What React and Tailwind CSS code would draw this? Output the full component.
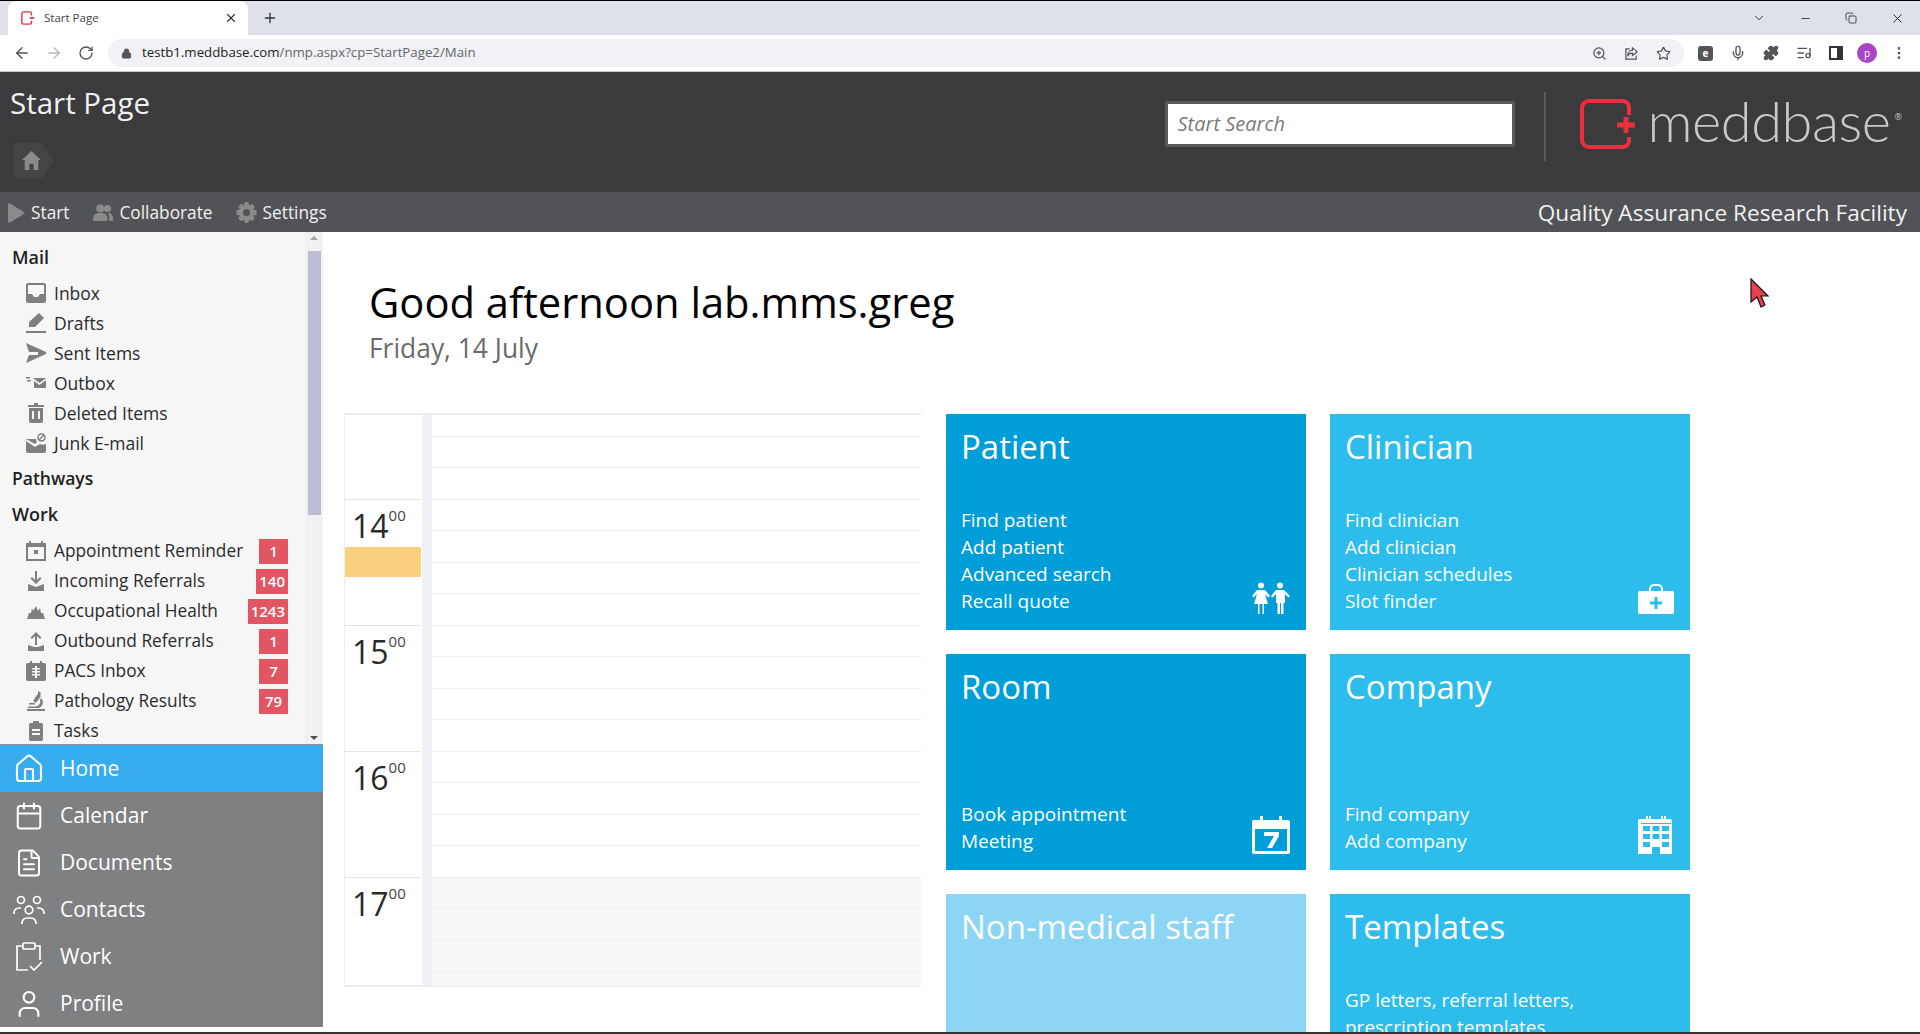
import {
  ArrowLeft, ArrowRight, RotateCw, Lock, ZoomIn, Star, Mic, Puzzle, ListMusic,
  MoreVertical, ChevronDown, Minus, Copy, X, Plus, Home, Calendar, FileText, User,
} from "lucide-react";

const mail = [
  ["Inbox", InboxIcon],
  ["Drafts", DraftIcon],
  ["Sent Items", SentIcon],
  ["Outbox", OutboxIcon],
  ["Deleted Items", TrashIcon],
  ["Junk E-mail", JunkIcon],
];

const work = [
  ["Appointment Reminder", ApptIcon, "1"],
  ["Incoming Referrals", DownIcon, "140"],
  ["Occupational Health", OccIcon, "1243"],
  ["Outbound Referrals", UpIcon, "1"],
  ["PACS Inbox", PacsIcon, "7"],
  ["Pathology Results", MicroIcon, "79"],
  ["Tasks", TaskIcon],
];

function InboxIcon() {
  return (
    <svg viewBox="0 0 20 20" className="w-5 h-5" fill="#7f7f7f">
      <path fillRule="evenodd" d="M2 0h16a2 2 0 0 1 2 2v16a2 2 0 0 1-2 2H2a2 2 0 0 1-2-2V2a2 2 0 0 1 2-2zm0 2v9h4l2 3h4l2-3h4V2z" />
    </svg>
  );
}
function DraftIcon() {
  return (
    <svg viewBox="0 0 20 20" className="w-5 h-5" fill="#7f7f7f">
      <path d="M13 0l5 5-9 9H3v-5z" />
      <rect x="0" y="18" width="20" height="2" />
    </svg>
  );
}
function SentIcon() {
  return (
    <svg viewBox="0 0 20 20" className="w-5 h-5" fill="#7f7f7f">
      <path d="M0 0l20 9v2L0 20l3-8h9V9H3z" />
    </svg>
  );
}
function OutboxIcon() {
  return (
    <svg viewBox="0 0 20 20" className="w-5 h-5" fill="#7f7f7f">
      <path d="M7 5h13l-6.500 5zM8 8l5.500 4L20 7v7a1 1 0 0 1-1 1H9a1 1 0 0 1-1-1zM0 4h4v1.500H0zM1 7h4v1.500H1z" />
    </svg>
  );
}
function TrashIcon() {
  return (
    <svg viewBox="0 0 20 20" className="w-5 h-5" fill="#7f7f7f">
      <path fillRule="evenodd" d="M8 0h4v2h6v2H2V2h6zM3 5h14v13a2 2 0 0 1-2 2H5a2 2 0 0 1-2-2zm3 3v8h2V8zm6 0v8h2V8z" />
    </svg>
  );
}
function JunkIcon() {
  return (
    <svg viewBox="0 0 20 20" className="w-5 h-5" fill="#7f7f7f">
      <path d="M0 6h10a6 6 0 0 0 1 3L9 11zM0 8l9 6 5-3a7 7 0 0 0 6 0v7a2 2 0 0 1-2 2H2a2 2 0 0 1-2-2z" />
      <circle cx="15.500" cy="4.500" r="3.500" fill="none" stroke="#7f7f7f" strokeWidth="1.500" />
      <path d="M13 7l5-5" stroke="#7f7f7f" strokeWidth="1.500" />
    </svg>
  );
}
function ApptIcon() {
  return (
    <svg viewBox="0 0 20 20" className="w-5 h-5" fill="#7f7f7f">
      <path fillRule="evenodd" d="M3 0h2v2h10V0h2v2h3v18H0V2h3zM2 6v12h16V6zm6 3h4v4H8z" />
    </svg>
  );
}
function DownIcon() {
  return (
    <svg viewBox="0 0 20 20" className="w-5 h-5" fill="#7f7f7f">
      <path d="M9 0h2v9l3-3 1.500 1.500L10 13 4.500 7.500 6 6l3 3zM2 13l8 3 8-3v7H2z" />
    </svg>
  );
}
function OccIcon() {
  return (
    <svg viewBox="0 0 20 20" className="w-5 h-5" fill="#7f7f7f">
      <path d="M1 18l2-6h2l1-5 1 3 3-5 2 5 2-3 1 5h2l2 6z" />
    </svg>
  );
}
function UpIcon() {
  return (
    <svg viewBox="0 0 20 20" className="w-5 h-5" fill="#7f7f7f">
      <path d="M9 14h2V5l3 3 1.500-1.500L10 1 4.500 6.500 6 8l3-3zM2 14l6 2h4l6-2v6H2z" />
    </svg>
  );
}
function PacsIcon() {
  return (
    <svg viewBox="0 0 20 20" className="w-5 h-5" fill="#7f7f7f">
      <path fillRule="evenodd" d="M4 0h2v2h8V0h2v2h2a2 2 0 0 1 2 2v14a2 2 0 0 1-2 2H2a2 2 0 0 1-2-2V4a2 2 0 0 1 2-2h2zM9 5v2H6v1.500h3v1.500H6v1.500h3V13H6v1.500h3V17h2v-2.500h3V13h-3v-1.500h3V10h-3V8.500h3V7h-3V5z" />
    </svg>
  );
}
function MicroIcon() {
  return (
    <svg viewBox="0 0 20 20" className="w-5 h-5" fill="#7f7f7f">
      <path d="M12 0l3 2-1 2 1 1-5 7-3-2 4-6 1-1zM1 18h18v2H1z" />
      <path d="M15 7a6 6 0 0 1-2 10H2v-1.500h7A5 5 0 0 0 14 9zM3 12h6v1.500H3z" />
    </svg>
  );
}
function TaskIcon() {
  return (
    <svg viewBox="0 0 20 20" className="w-5 h-5" fill="#7f7f7f">
      <path fillRule="evenodd" d="M7 0h6v2h2a2 2 0 0 1 2 2v14a2 2 0 0 1-2 2H5a2 2 0 0 1-2-2V4a2 2 0 0 1 2-2h2zM6 8v2h8V8zm0 4v2h8v-2z" />
    </svg>
  );
}

function Logo() {
  return (
    <svg viewBox="0 0 56 50" className="w-[56px] h-[50px]" fill="none">
      <path d="M43 2H9a7 7 0 0 0-7 7v32a7 7 0 0 0 7 7h34a7 7 0 0 0 6-6v-4M49 16V8a7 7 0 0 0-6-6" stroke="#ee2e3c" strokeWidth="4" />
      <path d="M37 26h18M46 18v16" stroke="#ee2e3c" strokeWidth="5" />
    </svg>
  );
}

function TabIcon() {
  return (
    <svg viewBox="0 0 16 16" className="w-[14px] h-[14px]" fill="none">
      <path d="M10 1H3a2 2 0 0 0-2 2v10a2 2 0 0 0 2 2h7a2 2 0 0 0 2-2v-2M12 5V3a2 2 0 0 0-2-2" stroke="#ee2e3c" strokeWidth="1.600" />
      <path d="M10 8h5" stroke="#ee2e3c" strokeWidth="2" />
    </svg>
  );
}

function ShareIcon() {
  return (
    <svg viewBox="0 0 16 16" className="w-[15px] h-[15px]" fill="none" stroke="#555" strokeWidth="1.300">
      <path d="M6 3H2v11h11v-4M9 2l5 4-5 4V7.500C6 7.500 4.500 9 4 11c0-4 2-6.500 5-6.500z" />
    </svg>
  );
}

function ExtIcon() {
  return (
    <div className="w-[15px] h-[15px] rounded-[3px] bg-[#555] flex items-center justify-center text-[10px] leading-none text-white font-bold">e</div>
  );
}

function ContactsIcon() {
  return (
    <svg viewBox="0 0 32 30" className="w-8 h-[30px]" fill="none" stroke="#fff" strokeWidth="1.700">
      <circle cx="8" cy="5" r="3.500" />
      <circle cx="24" cy="5" r="3.500" />
      <circle cx="16" cy="15" r="3.800" />
      <path d="M1 19v-1a5 5 0 0 1 5-5h2M31 19v-1a5 5 0 0 0-5-5h-2M9 29v-1a5 5 0 0 1 5-5h4a5 5 0 0 1 5 5v1" />
    </svg>
  );
}

function WorkIcon() {
  return (
    <svg viewBox="0 0 28 30" className="w-7 h-[30px]" fill="none" stroke="#fff" strokeWidth="1.700">
      <path d="M8 4H2v24h11M20 4h5v14" />
      <rect x="8" y="1" width="12" height="6" rx="1" />
      <path d="M15 24l4 4 8-8" />
    </svg>
  );
}

function PeopleIcon() {
  return (
    <svg viewBox="0 0 38 32" className="w-[38px] h-8" fill="#fff">
      <circle cx="9" cy="3.500" r="3" />
      <circle cx="28" cy="3.500" r="3" />
      <path d="M5 8h8l5 6-1.500 1.500L13 12l3 10h-4v10h-1.500V22h-3v10H6V22H2l3-10-3.500 3.500L0 14z" />
      <path d="M24 8h8l6 6-1.500 1.500L33 12v9h-1.500v11H29V21h-1v11h-2.500V21H24v-9l-3.500 3.500L19 14z" />
    </svg>
  );
}

function KitIcon({ color }) {
  return (
    <svg viewBox="0 0 36 30" className="w-9 h-[30px]" fill="none">
      <path d="M11 7V5a5 5 0 0 1 5-5h4a5 5 0 0 1 5 5v2h-2V5a3 3 0 0 0-3-3h-4a3 3 0 0 0-3 3v2z" fill="#fff" />
      <path d="M2 7h32a2 2 0 0 1 2 2v19a2 2 0 0 1-2 2H2a2 2 0 0 1-2-2V9a2 2 0 0 1 2-2z" fill="#fff" />
      <path d="M18 13v12M12 19h12" stroke={color} strokeWidth="3" />
    </svg>
  );
}

function CalSevenIcon({ color }) {
  return (
    <svg viewBox="0 0 38 38" className="w-[38px] h-[38px]" fill="#fff">
      <path d="M2 4h6V0h3v4h16V0h3v4h6a2 2 0 0 1 2 2v30a2 2 0 0 1-2 2H2a2 2 0 0 1-2-2V6a2 2 0 0 1 2-2z" />
      <rect x="3" y="13" width="32" height="22" fill={color} />
      <path d="M12 16h15v4l-7 12h-5l7-12h-10z" />
    </svg>
  );
}

function BuildingIcon() {
  return (
    <svg viewBox="0 0 36 38" className="w-9 h-[38px]" fill="#fff">
      <path fillRule="evenodd" d="M8 0h2v3h1V0h2v3h10V0h2v3h1V0h2v3h4a2 2 0 0 1 2 2v33H22v-7h-8v7H0V5a2 2 0 0 1 2-2h6zM5 10v5h7v-5zm9.500 0v5h7v-5zm9.500 0v5h7v-5zM5 18v5h7v-5zm9.500 0v5h7v-5zm9.500 0v5h7v-5zM5 26v5h7v-5zm19 0v5h7v-5zM3 7v1h30V7z" />
    </svg>
  );
}

function Cursor() {
  return (
    <svg viewBox="0 0 20 30" className="absolute left-[1750px] top-[277px] w-5 h-[30px]">
      <path d="M1 1l17 17h-7l4 9-4 2-4-10-6 5z" fill="#e8404f" stroke="#111" strokeWidth="1.200" />
    </svg>
  );
}

function Tile({ title, links, icon, color, linksTop }) {
  return (
    <div className={`w-[360px] h-[216px] shrink-0 relative flex flex-col px-[15px] ${color}`}>
      <h2 className="text-[33px] leading-[44px] mt-[11px] text-white">{title}</h2>
      <div className={`${linksTop ? "mt-[38px]" : "mt-auto mb-[15px]"} text-[19px] leading-[27px] text-white`}>
        {links.map((l) => (
          <div key={l} className="whitespace-nowrap">{l}</div>
        ))}
      </div>
      <div className="absolute right-[16px] bottom-[16px]">{icon}</div>
    </div>
  );
}

function HourLabel({ label }) {
  return (
    <div className="text-[#2b2b2b] pl-[7px] pt-[6px] flex">
      <span className="text-[32px] leading-[40px]">{label}</span>
      <span className="text-[15px] leading-[18px] text-[#444]">00</span>
    </div>
  );
}

function HourBlock({ label, height }) {
  return (
    <div className="border-b border-[#e3e3e3]" style={{ height }}>
      {label && <HourLabel label={label} />}
    </div>
  );
}

function Slots({ rows, shaded }) {
  return (
    <div className={shaded ? "bg-[#f8f8f9]" : ""}>
      {rows.map((h, i) => (
        <div key={i} className="border-b border-[#eeeeee]" style={{ height: h }} />
      ))}
    </div>
  );
}

function CalendarDay() {
  return (
    <div className="w-[577px] h-[574px] flex border-t-2 border-b-2 border-l border-[#eeeeee] shrink-0">
      <div className="w-[77px] shrink-0 pr-[1px]">
        <HourBlock height={85} />
        <div className="relative">
          <HourBlock label="14" height={126} />
          <div className="absolute left-0 right-0 top-[47px] h-[30px] bg-[#fad07f]" />
        </div>
        <HourBlock label="15" height={126} />
        <HourBlock label="16" height={126} />
        <div className="h-[109px]">
          <HourLabel label="17" />
        </div>
      </div>
      <div className="w-[10px] shrink-0 bg-[#eef2f6]" />
      <div className="flex-1">
        <Slots rows={[22, 31, 32]} />
        <Slots rows={[31, 32, 31, 32]} />
        <Slots rows={[31, 32, 31, 32]} />
        <Slots rows={[31, 32, 31, 32]} />
        <Slots rows={[31, 32, 31, 15]} shaded />
      </div>
    </div>
  );
}

export default function App() {
  return (
    <div className="relative w-[1920px] h-[1034px] overflow-hidden bg-white flex flex-col font-['Open_Sans','Noto_Sans',sans-serif] border-t border-black">
      {/* browser tab strip */}
      <div className="h-[34px] bg-[#dee1e9] flex items-end pl-[8px] shrink-0">
        <div className="w-[240px] h-[34px] bg-white rounded-t-lg flex items-center pl-[13px] pr-[10px] text-[11.5px] text-[#444]">
          <TabIcon />
          <span className="ml-[9px] flex-1">Start Page</span>
          <X size={14} color="#333" />
        </div>
        <div className="h-[34px] flex items-center ml-[14px]">
          <Plus size={16} color="#333" />
        </div>
        <div className="ml-auto h-[34px] flex items-center gap-[33px] pr-[15px] text-[#222]">
          <ChevronDown size={14} strokeWidth={1.5} />
          <Minus size={13} strokeWidth={1.5} />
          <Copy size={12} strokeWidth={1.5} />
          <X size={15} strokeWidth={1.5} />
        </div>
      </div>

      {/* browser toolbar */}
      <div className="h-[37px] bg-white flex items-center border-b border-[#c9c9c9] shrink-0 pl-[13px]">
        <ArrowLeft size={18} color="#555" />
        <ArrowRight size={18} color="#bbb" className="ml-[14px]" />
        <RotateCw size={16} color="#555" className="ml-[15px]" />
        <div className="ml-[14px] flex-1 h-[28px] bg-[#f0f2f6] rounded-full flex items-center pl-[13px] pr-[13px] text-[13.250px]">
          <Lock size={11} color="#555" fill="#555" />
          <span className="ml-[10px] text-[#222]">testb1.meddbase.com</span>
          <span className="text-[#666]">/nmp.aspx?cp=StartPage2/Main</span>
          <div className="ml-auto flex items-center gap-[17px] text-[#555]">
            <ZoomIn size={15} />
            <ShareIcon />
            <Star size={15} />
          </div>
        </div>
        <div className="flex items-center gap-[17px] pl-[14px] pr-[13px] text-[#555]">
          <ExtIcon />
          <Mic size={16} />
          <Puzzle size={16} fill="#555" />
          <ListMusic size={16} />
          <div className="w-[14px] h-[14px] border-2 border-[#333] border-r-[6px]" />
          <div className="w-[20px] h-[20px] rounded-full bg-[#a945c4] text-white text-[10px] flex items-center justify-center -ml-[3px]">p</div>
          <MoreVertical size={16} className="-ml-[3px]" />
        </div>
      </div>

      {/* app header */}
      <div className="h-[120px] bg-[#3b3b3d] flex shrink-0 relative">
        <div className="pl-[10px]">
          <h1 className="text-[29.500px] leading-[40px] mt-[11px] text-[#f1f1f1]">Start Page</h1>
          <div className="mt-[20px] ml-[4px] w-[40px] h-[35px] bg-[#444446] flex items-center pl-[7px] [clip-path:polygon(0_0,70%_0,100%_50%,70%_100%,0_100%)]">
            <svg viewBox="0 0 20 20" className="w-[21px] h-[21px]" fill="#8a8a8a">
              <path fillRule="evenodd" d="M10 1l9 8.500h-2.500V19h-13V9.500H1zM8 13v6h4v-6z" />
            </svg>
          </div>
        </div>
        <div className="ml-auto flex items-start pr-[18px]">
          <div className="mt-[29px] w-[350px] h-[46px] border-[3px] border-[#58595b] bg-white pl-[10px] flex items-center text-[20px] italic text-[#7b7b7b]">
            Start Search
          </div>
          <div className="w-[2px] h-[69px] bg-[#58595b] mt-[20px] ml-[29px]" />
          <div className="mt-[27px] ml-[34px] flex items-start">
            <Logo />
            <span className="text-[56px] leading-[44px] font-light tracking-[-0.5px] text-[#c8c8c8] font-['Lato',sans-serif] ml-[12px]">meddbase</span>
            <span className="text-[9px] text-[#c8c8c8] mt-[11px] ml-[4px]">®</span>
          </div>
        </div>
      </div>

      {/* app menu bar */}
      <div className="h-[40px] bg-[#525356] flex items-center shrink-0 text-[#f1f1f1] text-[17.300px] pl-[8px] pr-[13px] pt-[1px]">
        <svg viewBox="0 0 16 20" className="w-[16px] h-[20px]" fill="#8a8a8a"><path d="M2 0.500L15 8.500a1.700 1.700 0 0 1 0 3L2 19.500a1.300 1.300 0 0 1-2-1.200V1.700a1.300 1.300 0 0 1 2-1.200z" /></svg>
        <span className="ml-[7px]">Start</span>
        <svg viewBox="0 0 24 20" className="w-[22px] h-[18px] ml-[23px]" fill="#8a8a8a">
          <circle cx="9" cy="5" r="4.500" /><circle cx="17" cy="5" r="4" />
          <path d="M1 19v-3a6 6 0 0 1 6-6h4a6 6 0 0 1 6 6v3zM19 19v-4a6 6 0 0 0-2-5h1a5 5 0 0 1 5 5v4z" />
        </svg>
        <span className="ml-[5px]">Collaborate</span>
        <svg viewBox="0 0 24 24" className="w-[21px] h-[21px] ml-[23px]" fill="#8a8a8a">
          <path fillRule="evenodd" d="M10 0h4l1 4 3-2 3.500 3.500-2 3 4 1v5l-4 1 2 3-3.500 3.500-3-2-1 4h-4l-1-4-3 2L2.500 18.500l2-3-4-1v-5l4-1-2-3L6 2l3 2zm2 8a4 4 0 1 0 0 8 4 4 0 0 0 0-8z" />
        </svg>
        <span className="ml-[6px]">Settings</span>
        <span className="ml-auto text-[22.600px]">Quality Assurance Research Facility</span>
      </div>

      <div className="flex-1 flex min-h-0">
        {/* left side */}
        <div className="w-[323px] shrink-0 flex flex-col h-[795px]">
          <div className="h-[512px] bg-[#f6f6f7] relative overflow-hidden shrink-0 pr-[18px] text-[#2b2b2b]">
            <div className="pl-[12px] pt-[10px]">
              <h3 className="text-[18px] font-semibold leading-[30px] text-[#222]">Mail</h3>
              <ul className="mt-[6px]">
                {mail.map(([name, Icon]) => (
                  <li key={name} className="h-[30px] flex items-center pl-[14px] text-[17.500px]">
                    <Icon />
                    <span className="ml-[8px]">{name}</span>
                  </li>
                ))}
              </ul>
              <h3 className="text-[17.500px] font-semibold leading-[30px] mt-[5px] text-[#222]">Pathways</h3>
              <h3 className="text-[18px] font-semibold leading-[30px] mt-[6px] text-[#222]">Work</h3>
              <ul className="mt-[7px]">
                {work.map(([name, Icon, n]) => (
                  <li key={name} className="h-[30px] flex items-center pl-[14px] pr-[17px] text-[17.300px] whitespace-nowrap">
                    <Icon />
                    <span className="ml-[8px]">{name}</span>
                    {n && (
                      <span className="ml-auto min-w-[29px] h-[25px] px-[3px] bg-[#e25563] text-white text-[15px] font-semibold flex items-center justify-center">
                        {n}
                      </span>
                    )}
                  </li>
                ))}
              </ul>
            </div>
            {/* scrollbar */}
            <div className="absolute right-0 top-0 bottom-0 w-[18px] bg-[#f1f1f1] flex flex-col items-center">
              <div className="w-0 h-0 mt-[4px] border-x-[4px] border-x-transparent border-b-[4px] border-b-[#a3a3a3]" />
              <div className="w-[13px] h-[264px] bg-[#bdbdd3] mt-[11px]" />
              <div className="w-0 h-0 mt-auto mb-[4px] border-x-[4px] border-x-transparent border-t-[4px] border-t-[#505050]" />
            </div>
          </div>
          <nav className="flex-1 bg-[#7f8081] text-white text-[21px] border-t border-[#8c8c8c]">
            {[
              ["Home", <Home size={32} strokeWidth={1.6} />, true],
              ["Calendar", <Calendar size={30} strokeWidth={1.6} />],
              ["Documents", <FileText size={30} strokeWidth={1.6} />],
              ["Contacts", <ContactsIcon />],
              ["Work", <WorkIcon />],
              ["Profile", <User size={32} strokeWidth={1.6} />],
            ].map(([name, icon, active]) => (
              <div key={name} className={`h-[47px] flex items-center ${active ? "bg-[#37adef]" : ""}`}>
                <span className="w-[57px] flex justify-center mr-[3px]">{icon}</span>
                <span>{name}</span>
              </div>
            ))}
          </nav>
        </div>

        {/* main content */}
        <div className="flex-1 min-w-0 relative overflow-hidden">
          <div className="pl-[46px] pt-[43px]">
            <h2 className="text-[41.700px] leading-[54px] text-black">Good afternoon lab.mms.greg</h2>
            <p className="text-[26.400px] leading-[32px] text-[#6b6b6b] mt-[3px]">Friday, 14 July</p>
          </div>
          <div className="flex mt-[49px] pl-[21px]">
            <CalendarDay />
            <div className="ml-[25px] mt-[1px] grid grid-cols-[360px_360px] gap-[24px] content-start">
              <Tile
                title="Patient"
                color="bg-[#009ed8]"
                links={["Find patient", "Add patient", "Advanced search", "Recall quote"]}
                icon={<PeopleIcon />}
              />
              <Tile
                title="Clinician"
                color="bg-[#2dbdec]"
                links={["Find clinician", "Add clinician", "Clinician schedules", "Slot finder"]}
                icon={<KitIcon color="#2dbdec" />}
              />
              <Tile
                title="Room"
                color="bg-[#009ed8]"
                links={["Book appointment", "Meeting"]}
                icon={<CalSevenIcon color="#009ed8" />}
              />
              <Tile
                title="Company"
                color="bg-[#2dbdec]"
                links={["Find company", "Add company"]}
                icon={<BuildingIcon />}
              />
              <Tile title="Non-medical staff" color="bg-[#8cd5f5]" links={[]} />
              <Tile
                title="Templates"
                color="bg-[#2dbdec]"
                links={["GP letters, referral letters,", "prescription templates"]}
                linksTop
              />
            </div>
          </div>
        </div>
      </div>
      <div className="absolute left-0 right-0 bottom-0 h-[2px] bg-[#333]" />
      <Cursor />
    </div>
  );
}
